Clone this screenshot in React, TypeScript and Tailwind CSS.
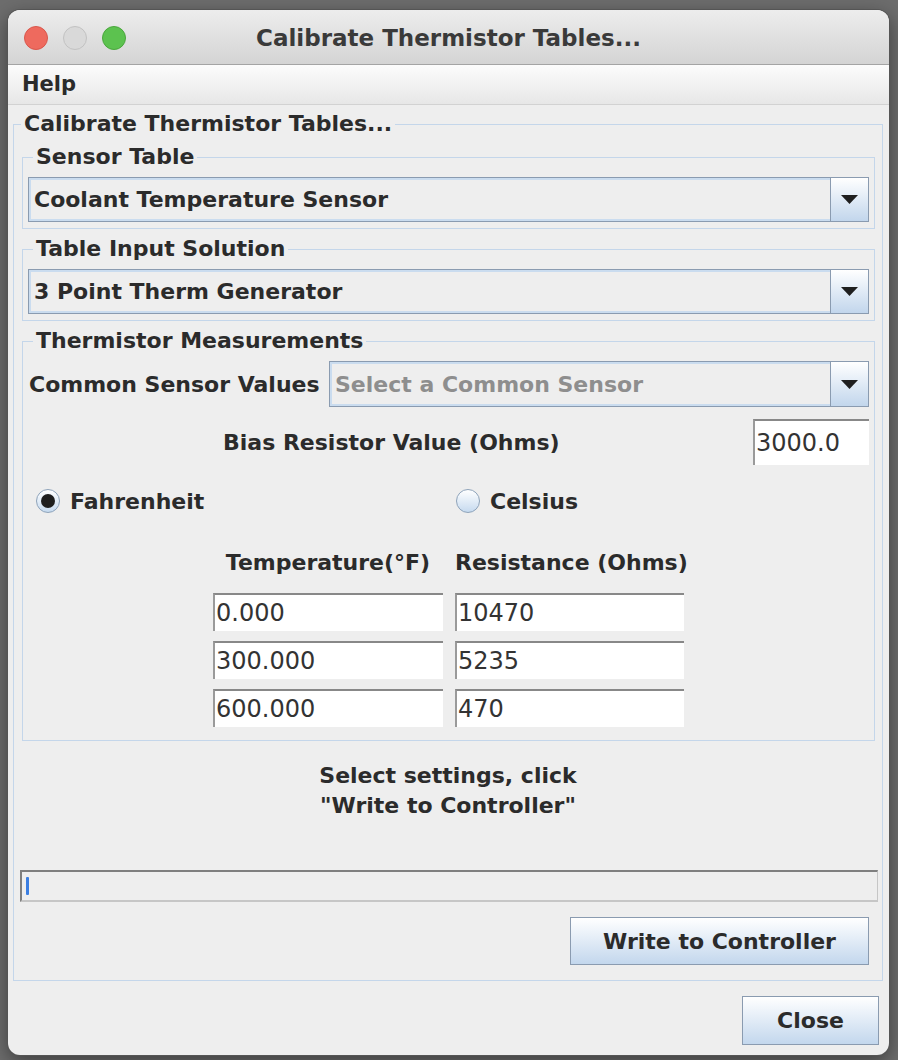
import type { ReactNode } from 'react';

// Swing-on-macOS look: titled borders, aqua-ish combos and buttons
const FONT = "font-['DejaVu_Sans','Liberation_Sans',sans-serif]";

function Group({ title, outer, children, className = '' }: { title: string; outer?: boolean; children: ReactNode; className?: string }) {
  return (
    <fieldset className={`border border-[#c4d6ea] ${className}`}>
      <legend className={`${outer ? 'ml-[7px]' : 'ml-[10px]'} px-[3px] text-[22px] font-bold leading-[24px] text-[#2b2b2b]`}>
        {title}
      </legend>
      {children}
    </fieldset>
  );
}

function Combo({ value, placeholder, className = '' }: { value?: string; placeholder?: string; className?: string }) {
  return (
    <div className={`flex border border-[#8a9bb0] bg-[#eeeeee] shadow-[inset_0_0_0_2px_#cadcef] ${className}`}>
      <div className={`flex flex-1 items-center pl-[5px] text-[22px] font-bold ${value ? 'text-[#2b2b2b]' : 'text-[#8e8e8e]'}`}>
        {value ?? placeholder}
      </div>
      <div className="flex w-[38px] items-center justify-center border-l border-[#8a9bb0] bg-gradient-to-b from-white to-[#c2d6ec]">
        <svg width="17" height="9" viewBox="0 0 17 9">
          <path d="M0 0h17L8.5 9z" fill="#1f1f1f" />
        </svg>
      </div>
    </div>
  );
}

function Field({ value, className = '' }: { value: string; className?: string }) {
  return (
    <div className={`flex items-center border-l-2 border-t-2 border-l-[#9a9a9a] border-t-[#888888] bg-white pl-[1px] text-[24px] text-[#333333] ${className}`}>
      {value}
    </div>
  );
}

function Radio({ checked, label }: { checked?: boolean; label: string }) {
  return (
    <div className="flex items-center gap-[10px]">
      <div className="flex h-[24px] w-[24px] items-center justify-center rounded-full border border-[#8ea3ba] bg-gradient-to-b from-white to-[#c6daef]">
        {checked && <div className="h-[14px] w-[14px] rounded-full bg-[#1e1e1e]" />}
      </div>
      <span className="text-[22px] font-bold text-[#2b2b2b]">{label}</span>
    </div>
  );
}

function Button({ label, className = '' }: { label: string; className?: string }) {
  return (
    <button className={`flex items-center justify-center border border-[#8a9bb0] bg-gradient-to-b from-white to-[#c3d7ed] text-[22px] font-bold text-[#2b2b2b] ${className}`}>
      {label}
    </button>
  );
}

const rows = [
  ['0.000', '10470'],
  ['300.000', '5235'],
  ['600.000', '470'],
];

export default function App() {
  return (
    <div className={`h-[1060px] w-[898px] overflow-hidden bg-[#6d6d6d] pl-[8px] pt-[10px] ${FONT}`}>
      <div className="flex h-[1045px] w-[881px] flex-col overflow-hidden rounded-[12px] bg-[#eeeeee] shadow-[0_0_0_1px_#555555,0_6px_20px_rgba(0,0,0,0.45)]">
        {/* title bar */}
        <div className="relative flex h-[55px] items-center justify-center border-b border-[#a4a4a4] bg-gradient-to-b from-[#ededed] to-[#d4d4d4] pt-[3px]">
          <div className="absolute left-[16px] top-[16px] flex gap-[15px]">
            <div className="h-[24px] w-[24px] rounded-full border border-[#d9574c] bg-[#ee6a5e]" />
            <div className="h-[24px] w-[24px] rounded-full border border-[#c2c2c2] bg-[#d9d9d9]" />
            <div className="h-[24px] w-[24px] rounded-full border border-[#4aa73d] bg-[#5cc24f]" />
          </div>
          <span className="text-[23px] font-bold text-[#3a3a3a]">Calibrate Thermistor Tables...</span>
        </div>

        {/* menu bar */}
        <div className="flex h-[40px] items-center border-b border-[#d2d2d2] bg-gradient-to-b from-[#fcfcfc] to-[#e7e7e7] pl-[14px]">
          <span className="text-[21px] font-bold text-[#2b2b2b]">Help</span>
        </div>

        <div className="flex flex-1 flex-col pl-[5px] pr-[6px] pt-[7px]">
          <Group title="Calibrate Thermistor Tables..." outer>
            <div className="flex flex-col pt-[9px]">
              <Group title="Sensor Table" className="ml-[8px] mr-[7px]">
                <div className="px-[5px] pb-[6px] pt-[8px]">
                  <Combo value="Coolant Temperature Sensor" className="h-[45px]" />
                </div>
              </Group>

              <Group title="Table Input Solution" className="ml-[8px] mr-[7px] mt-[8px]">
                <div className="px-[5px] pb-[6px] pt-[8px]">
                  <Combo value="3 Point Therm Generator" className="h-[45px]" />
                </div>
              </Group>

              <Group title="Thermistor Measurements" className="ml-[8px] mr-[7px] mt-[8px]">
                <div className="flex flex-col pb-[13px] pl-[6px] pr-[5px] pt-[8px]">
                  <div className="flex items-center">
                    <span className="text-[22px] font-bold text-[#2b2b2b]">Common Sensor Values</span>
                    <Combo placeholder="Select a Common Sensor" className="ml-auto h-[46px] w-[540px]" />
                  </div>

                  <div className="mt-[12px] flex items-center">
                    <span className="ml-[194px] text-[22px] font-bold text-[#2b2b2b]">Bias Resistor Value (Ohms)</span>
                    <Field value="3000.0" className="ml-auto h-[46px] w-[116px]" />
                  </div>

                  <div className="mt-[20px] flex h-[32px] items-center pl-[7px]">
                    <div className="w-[420px]">
                      <Radio checked label="Fahrenheit" />
                    </div>
                    <Radio label="Celsius" />
                  </div>

                  <div className="ml-[184px] mt-[34px] grid w-[471px] grid-cols-[230px_229px] gap-x-[12px] gap-y-[10px]">
                    <div className="h-[24px] whitespace-nowrap text-center text-[22px] font-bold leading-[24px] text-[#2b2b2b]">Temperature(°F)</div>
                    <div className="h-[24px] whitespace-nowrap text-center text-[22px] font-bold leading-[24px] text-[#2b2b2b]">Resistance (Ohms)</div>
                    {rows.map(([t, r], i) => (
                      <div key={i} className="contents">
                        <Field value={t} className={`h-[38px] ${i === 0 ? 'mt-[8px]' : ''}`} />
                        <Field value={r} className={`h-[38px] ${i === 0 ? 'mt-[8px]' : ''}`} />
                      </div>
                    ))}
                  </div>
                </div>
              </Group>

              <div className="mt-[20px] text-center text-[22px] font-bold leading-[30px] text-[#2b2b2b]">
                Select settings, click
                <br />
                "Write to Controller"
              </div>

              <div className="ml-[6px] mr-[4px] mt-[49px] flex h-[32px] items-center border-b-2 border-l-2 border-r border-t-2 border-b-[#c6c6c6] border-l-[#7f7f7f] border-r-[#c6c6c6] border-t-[#7f7f7f] bg-[#eeeeee] pl-[4px]">
                <div className="h-[18px] w-[3px] rounded-[1px] bg-[#3a7ee2]" />
              </div>

              <div className="mb-[15px] mr-[13px] mt-[15px] flex justify-end">
                <Button label="Write to Controller" className="h-[48px] w-[299px]" />
              </div>
            </div>
          </Group>

          <div className="mr-[4px] mt-[15px] flex justify-end">
            <Button label="Close" className="h-[49px] w-[137px]" />
          </div>
        </div>
      </div>
    </div>
  );
}
